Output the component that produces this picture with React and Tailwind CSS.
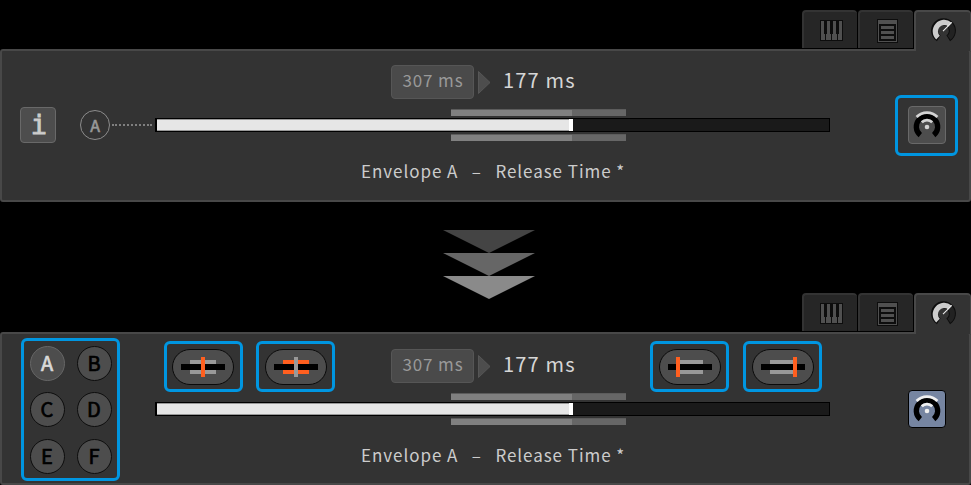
import React from "react";

const FONT = "font-['Noto_Sans_CJK_SC','Open_Sans',sans-serif]";

function KeysIcon() {
  return (
    <svg width="23" height="21" shapeRendering="crispEdges">
      <rect width="23" height="21" fill="#0d0d0d" />
      <g fill="#505050">
        <rect x="1" y="1" width="3" height="13" />
        <rect x="1" y="14" width="4" height="6" />
        <rect x="6" y="14" width="5" height="6" />
        <rect x="7" y="1" width="3" height="13" />
        <rect x="12" y="14" width="5" height="6" />
        <rect x="13" y="1" width="3" height="13" />
        <rect x="18" y="14" width="4" height="6" />
        <rect x="19" y="1" width="3" height="13" />
      </g>
    </svg>
  );
}

function ListIcon() {
  return (
    <svg width="21" height="24" shapeRendering="crispEdges">
      <rect width="21" height="24" fill="#0d0d0d" />
      <rect x="1" y="1" width="19" height="22" fill="#505050" />
      <rect x="2" y="5" width="17" height="17" fill="#0d0d0d" />
      <g fill="#505050">
        <rect x="4" y="7" width="13" height="3" />
        <rect x="4" y="12" width="13" height="3" />
        <rect x="4" y="17" width="13" height="3" />
      </g>
    </svg>
  );
}

function KnobIcon() {
  return (
    <svg width="28" height="28" fill="none">
      <path d="M9.8 23.25 A8.9 8.9 0 1 1 19.2 23.25" stroke="#0d0d0d" strokeWidth="7" />
      <path d="M20 22.7 A8.9 8.9 0 0 0 20.8 9.4" stroke="#222" strokeWidth="5" />
      <path d="M9 22.7 A8.9 8.9 0 0 1 20.8 9.4" stroke="#ccc" strokeWidth="5.2" />
      <path d="M14 16.2 L22.8 7.4" stroke="#eee" strokeWidth="1.1" />
    </svg>
  );
}

function ModIcon({ light }) {
  return (
    <svg width="36" height="36" fill="none">
      <path d="M11.3 28.1 A10.7 10.7 0 1 1 24.7 28.1" stroke="#000" strokeWidth="5.3" />
      <path d="M7.6 9.9 A14.7 14.7 0 0 1 28.4 9.9" stroke={light} strokeWidth="2.8" />
      <path d="M12.8 15.2 A7.4 7.4 0 0 1 23.2 15.2" stroke={light} strokeWidth="2.8" />
      <circle cx="18" cy="20" r="2.3" fill={light} />
    </svg>
  );
}

function Tabs() {
  return (
    <div className="flex h-[39px] justify-end">
      <div className="flex h-[38px] w-[55px] rounded-t-[4px] border-t-2 border-l-2 border-[#333] bg-[#262626] pt-[8px] pl-[16px]">
        <KeysIcon />
      </div>
      <div className="ml-[1px] flex h-[38px] w-[55px] rounded-t-[4px] border-t-2 border-l-2 border-[#333] bg-[#262626] pt-[7px] pl-[17px]">
        <ListIcon />
      </div>
      <div className="relative z-10 ml-[1px] flex h-[41px] w-[57px] rounded-t-[4px] border-t-2 border-r border-l-2 border-[#484848] bg-[#333] pt-[3px] pl-[13px]">
        <KnobIcon />
      </div>
    </div>
  );
}

function Strip({ kind }) {
  return (
    <svg width="44" height="20" shapeRendering="crispEdges">
      {kind === "center" && <rect x="9" y="3" width="26" height="14" fill="#999" />}
      {kind === "range" && <rect x="9" y="3" width="26" height="14" fill="#ff5f1f" />}
      {kind === "min" && <rect x="12" y="3" width="23" height="14" fill="#999" />}
      {kind === "max" && <rect x="9" y="3" width="23" height="14" fill="#999" />}
      <rect y="7" width="44" height="6" fill="#000" />
      {kind === "center" && <rect x="20" width="4" height="20" fill="#ff5f1f" />}
      {kind === "range" && <rect x="20" width="4" height="20" fill="#999" />}
      {kind === "min" && <rect x="8" width="4" height="20" fill="#ff5f1f" />}
      {kind === "max" && <rect x="32" width="4" height="20" fill="#ff5f1f" />}
    </svg>
  );
}

function PillButton({ kind, pad = "pl-[6px]", className = "" }) {
  return (
    <div className={`h-[51px] w-[79px] shrink-0 rounded-[6px] border-3 border-[#0096e1] pt-[5px] ${pad} ${className}`}>
      <div className="flex h-[36px] w-[62px] items-center justify-center rounded-full border border-[#0a0a0a] bg-[#4d4d4d]">
        <Strip kind={kind} />
      </div>
    </div>
  );
}

function Values() {
  return (
    <div className="flex h-[34px] items-center">
      <div className="flex h-[34px] w-[83px] items-center justify-center rounded-[4px] border border-[#565656] bg-[#4a4a4a] pb-[5px] pl-[1px] text-[17px] leading-[20px] tracking-[0.9px] text-[#999]">
        307 ms
      </div>
      <svg width="13" height="23" className="ml-[4px]">
        <path d="M0.5 0.5 L12 11.5 L0.5 22.5 Z" fill="#4d4d4d" stroke="#565656" />
      </svg>
      <div className="mb-[5px] ml-[12px] w-[90px] text-[20px] leading-[24px] tracking-[1.2px] whitespace-nowrap text-[#d6d6d6]">
        177 ms
      </div>
    </div>
  );
}

function RangeBar() {
  return (
    <div className="ml-[296px] flex h-[7px] w-[175px] border-t border-[#5c5c5c]">
      <div className="w-[121px] bg-[#808080]" />
      <div className="flex-1 bg-[#666]" />
    </div>
  );
}

function Slider() {
  return (
    <div className="flex flex-col gap-[2px]">
      <RangeBar />
      <div className="flex h-[14px] w-[675px] border border-black bg-[#1a1a1a]">
        <div className="w-[1px] bg-black" />
        <div className="w-[412px] border-y border-[#999] bg-[#e6e6e6]" />
        <div className="w-[4px] bg-white" />
      </div>
      <RangeBar />
    </div>
  );
}

function Label() {
  return (
    <div className="mt-[18px] ml-[206px] text-[17px] leading-[24px] tracking-[0.95px] whitespace-pre text-[#ccc]">
      {"Envelope A"}
      <span className="mx-[13.5px]">–</span>
      {"Release Time *"}
    </div>
  );
}

function Letter({ children, active }) {
  return (
    <div
      className={`flex size-[35px] items-center justify-center rounded-full border bg-[#4d4d4d] text-[20px] leading-[22px] [-webkit-text-stroke-width:0.7px] ${
        active ? "border-[#666] text-[#d9d9d9]" : "border-[#0d0d0d] text-black"
      }`}
    >
      {children}
    </div>
  );
}

const PANEL = "flex h-[153px] w-full rounded-[3px] border-2 border-[#484848] bg-[#333]";

export default function App() {
  return (
    <div className={`h-[485px] w-[971px] overflow-hidden bg-black pt-[10px] ${FONT}`}>
      <Tabs />
      <div className={PANEL}>
        <div className="flex w-[153px] items-start pt-[56px] pl-[18px]">
          <div className="flex size-[36px] items-center justify-center rounded-[4px] border border-[#696969] bg-[#4d4d4d] pl-[2px] font-['DejaVu_Sans_Mono',monospace] text-[27px] leading-[28px] text-[#ccc] [-webkit-text-stroke-width:0.8px]">
            i
          </div>
          <div className="mt-[3px] ml-[24px] flex size-[30px] items-center justify-center rounded-full border-[1.5px] border-[#8c8c8c] text-[16px] leading-[20px] text-[#999] [-webkit-text-stroke-width:0.6px]">
            A
          </div>
          <div className="mt-[17px] ml-[2px] w-[40px] border-t-2 border-dotted border-[#808080]" />
        </div>
        <div className="flex w-[675px] flex-col">
          <div className="h-[58px] pt-[14px] pl-[236px]">
            <Values />
          </div>
          <Slider />
          <Label />
        </div>
        <div className="pt-[44px] pl-[65px]">
          <div className="h-[61px] w-[63px] rounded-[6px] border-3 border-[#0096e1] pt-[8px] pl-[10px]">
            <div className="size-[38px] rounded-[4px] border border-[#696969] bg-[#4d4d4d]">
              <ModIcon light="#d4d4d4" />
            </div>
          </div>
        </div>
      </div>

      <div className="flex h-[91px] flex-col items-center pt-[28px] pl-[7px]">
        <svg width="92" height="69" className="shrink-0">
          <path d="M0 0 H92 L46 23 Z" fill="#444" />
          <path d="M0 23 H92 L46 46 Z" fill="#666" />
          <path d="M0 46 H92 L46 69 Z" fill="#8a8a8a" />
        </svg>
      </div>

      <Tabs />
      <div className={PANEL}>
        <div className="w-[153px] pt-[4px] pl-[19px]">
          <div className="grid h-[143px] w-[99px] grid-cols-[47px_35px] grid-rows-[46px_47px_35px] rounded-[6px] border-3 border-[#0096e1] pt-[4.5px] pl-[5.5px]">
            <Letter active>A</Letter>
            <Letter>B</Letter>
            <Letter>C</Letter>
            <Letter>D</Letter>
            <Letter>E</Letter>
            <Letter>F</Letter>
          </div>
        </div>
        <div className="flex w-[675px] flex-col">
          <div className="flex h-[59px] pt-[7px] pl-[9px]">
            <PillButton kind="center" pad="pl-[5px]" />
            <PillButton kind="range" className="ml-[13px]" />
            <div className="ml-[56px] w-[259px] pt-[8px]">
              <Values />
            </div>
            <PillButton kind="min" />
            <PillButton kind="max" className="ml-[14px]" />
          </div>
          <Slider />
          <Label />
        </div>
        <div className="pt-[56px] pl-[78px]">
          <div className="size-[38px] rounded-[4px] border border-black bg-[#7685a1]">
            <ModIcon light="#f0f0f0" />
          </div>
        </div>
      </div>
    </div>
  );
}
